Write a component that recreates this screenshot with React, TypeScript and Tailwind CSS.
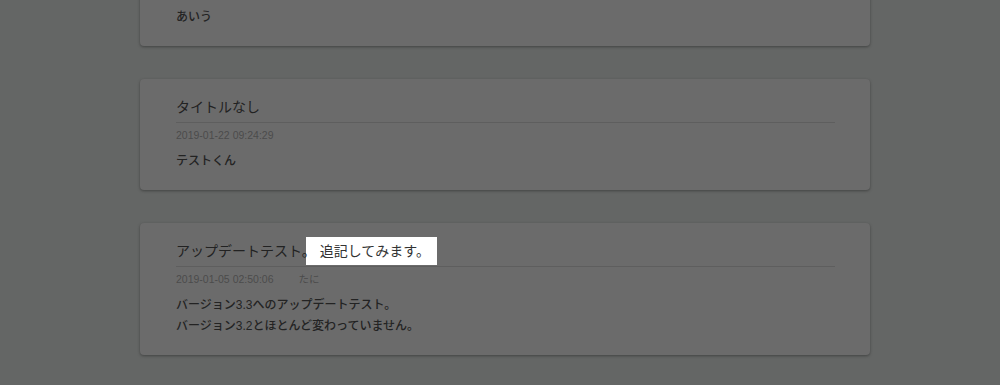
import React from "react";

type Post = {
  title?: string;
  date?: string;
  author?: string;
  body: string[];
  note?: string;
};

const posts: Post[] = [
  { body: ["あいう"] },
  { title: "タイトルなし", date: "2019-01-22 09:24:29", body: ["テストくん"] },
  {
    title: "アップデートテスト。",
    note: "追記してみます。",
    date: "2019-01-05 02:50:06",
    author: "たに",
    body: ["バージョン3.3へのアップデートテスト。", "バージョン3.2とほとんど変わっていません。"],
  },
];

const font = "font-['Liberation_Sans','Noto_Sans_CJK_JP',sans-serif]";

function PostCard({ post }: { post: Post }) {
  // the first card is scrolled past the top edge, only its body shows
  const clipped = !post.title;
  return (
    <div
      className={
        "w-[730px] rounded-[4px] bg-[#6b6b6b] shadow-[0_1px_3px_rgba(0,0,0,0.35)] pl-[36px] pr-[35px] pb-[18px] " +
        (clipped ? "pt-[27px]" : "pt-[20px]")
      }
    >
      {post.title && (
        <>
          <h2 className="text-[14px] leading-[16px] text-[#222] pb-[7px] border-b border-[#5e5e5e] whitespace-nowrap">
            <span className="relative z-10">{post.title}</span>
            {post.note && (
              <span className="-ml-[10px] pl-[14px] pr-[7px] py-[6px] bg-white text-[#333]">{post.note}</span>
            )}
          </h2>
          <div className="flex pt-[5px] text-[10.5px] leading-[14px] text-[#4c4c4c]">
            <span>{post.date}</span>
            {post.author && <span className="ml-[25px]">{post.author}</span>}
          </div>
        </>
      )}
      <div className={(clipped ? "" : "pt-[9px] ") + "text-[12px] leading-[21px] font-medium text-[#232323]"}>
        {post.body.map((line, i) => (
          <p key={i}>{line}</p>
        ))}
      </div>
    </div>
  );
}

export default function App() {
  return (
    <div className={`w-[1000px] h-[385px] overflow-hidden bg-[#646665] ${font}`}>
      <div className="flex flex-col items-center gap-[33px] -mt-[20px] pl-[10px]">
        {posts.map((p, i) => (
          <PostCard key={i} post={p} />
        ))}
      </div>
    </div>
  );
}
